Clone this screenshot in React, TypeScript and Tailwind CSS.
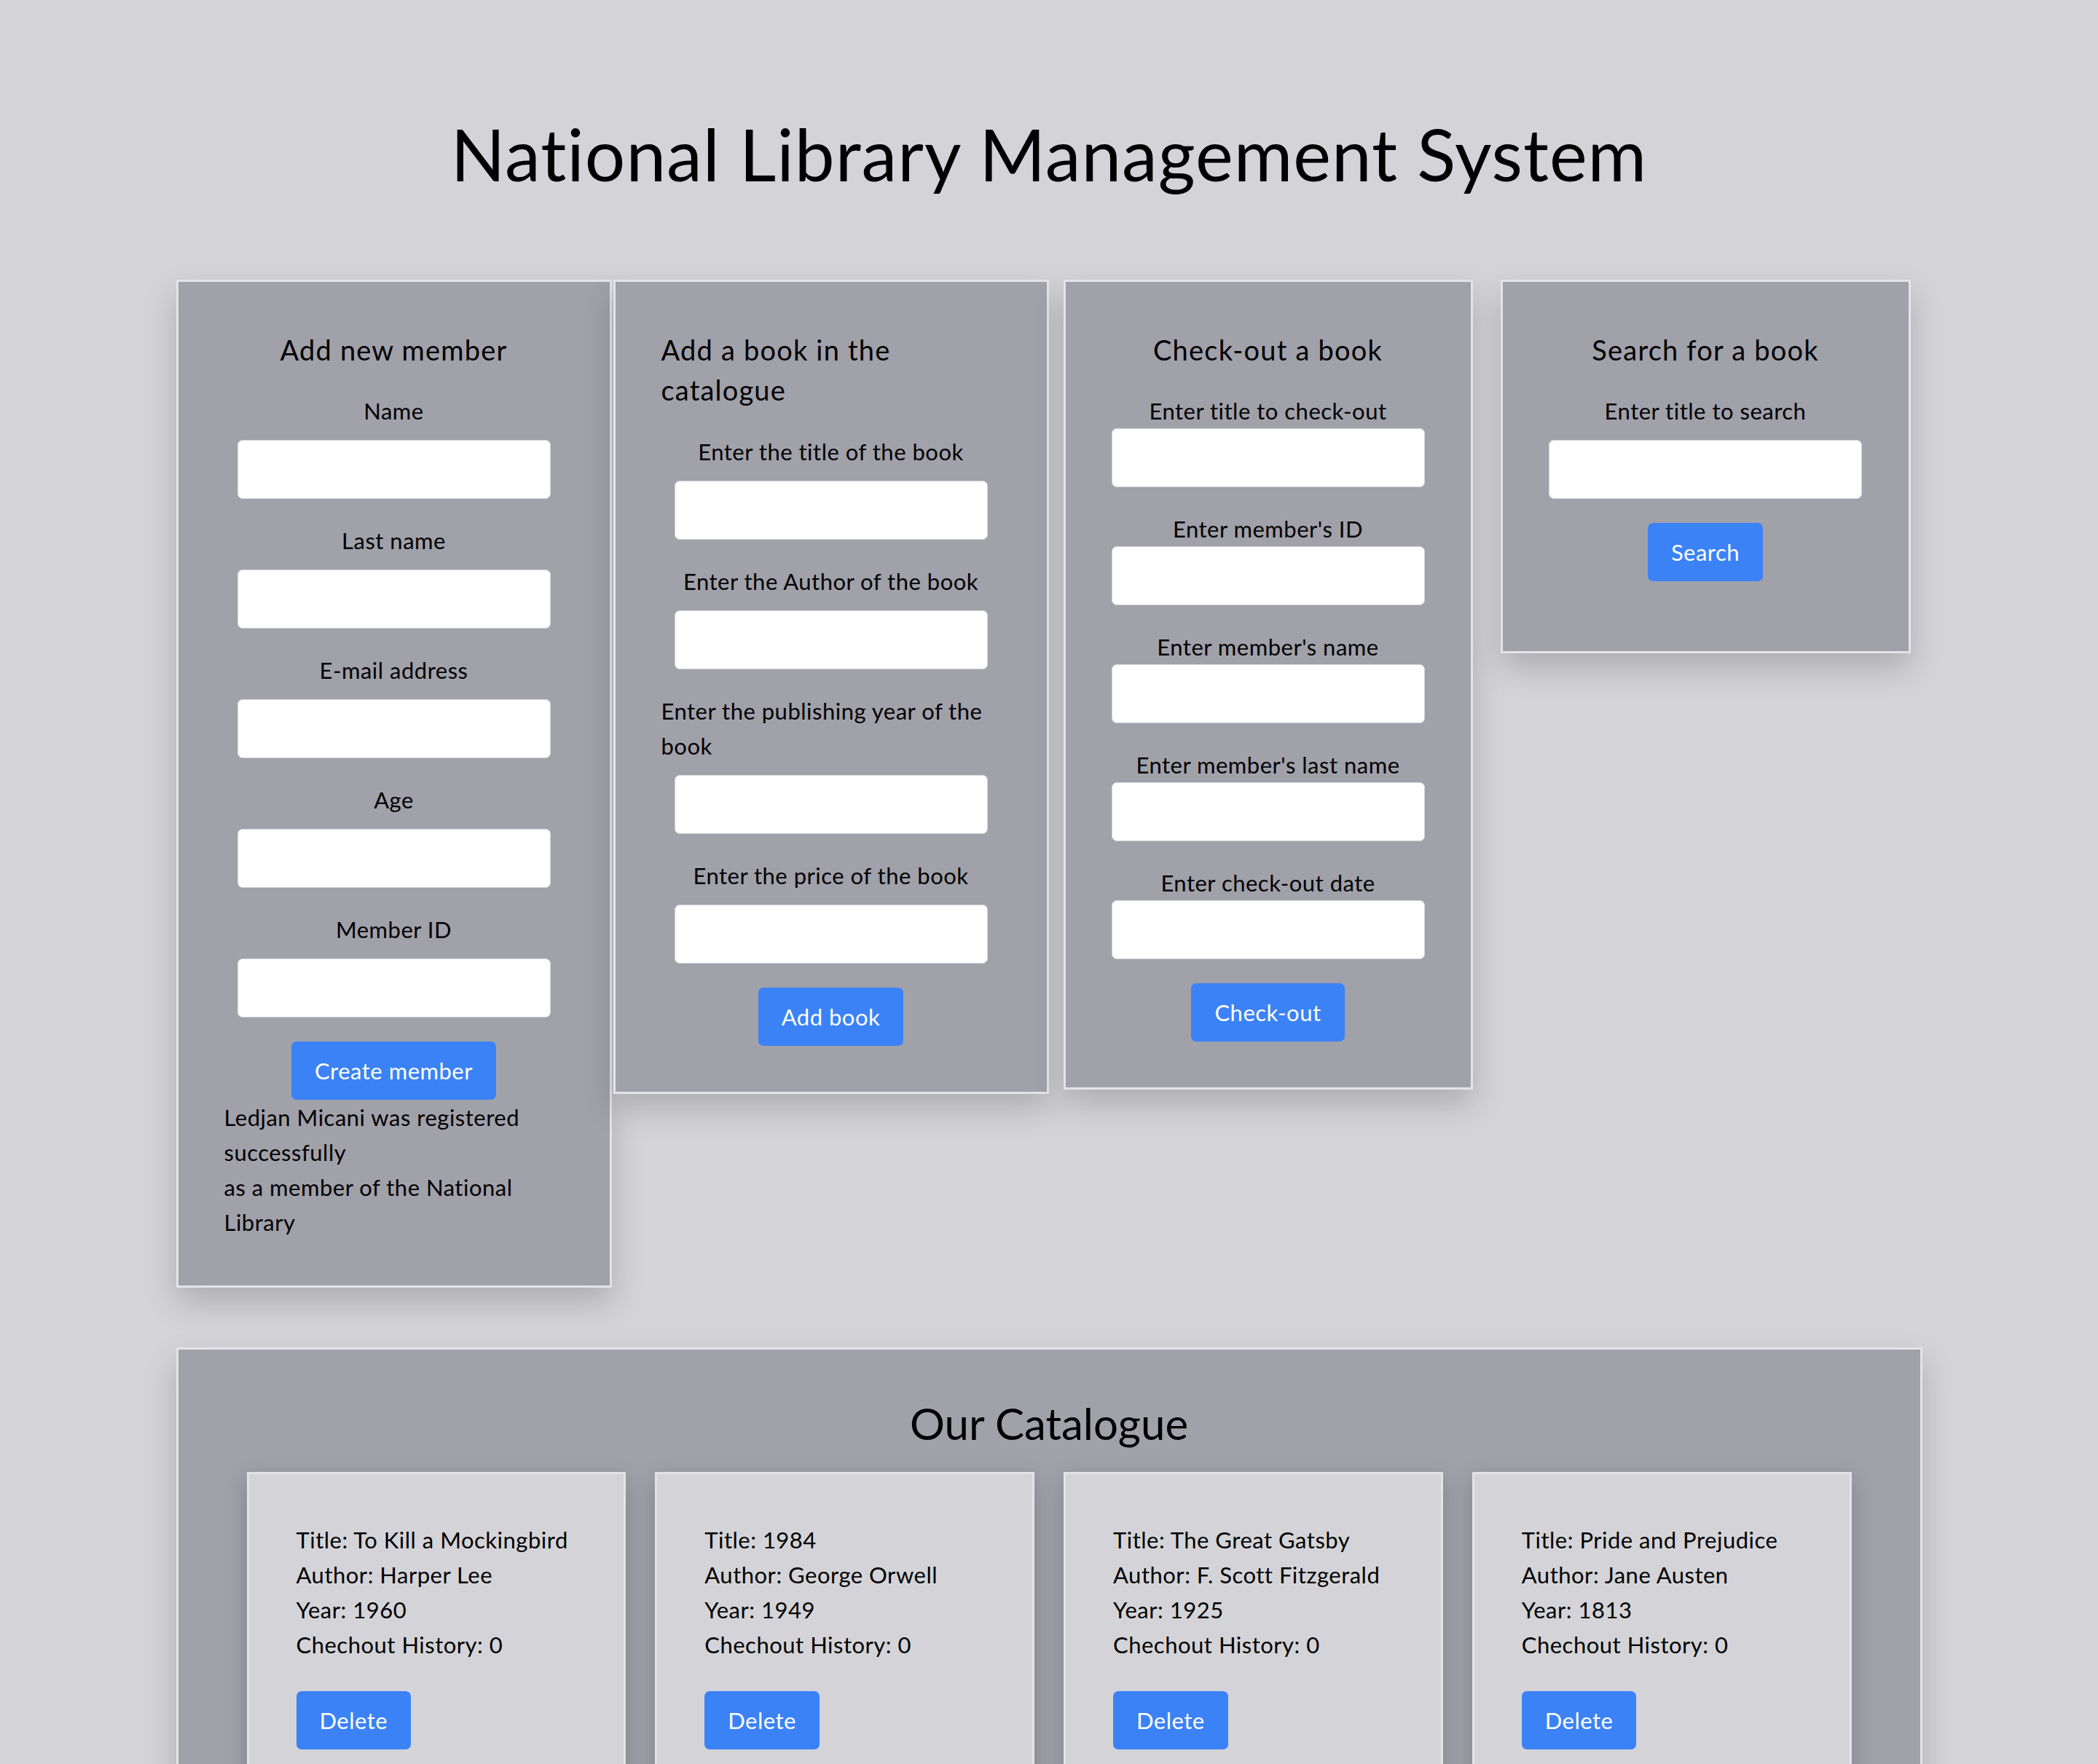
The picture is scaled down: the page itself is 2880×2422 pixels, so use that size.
import React from "react";

const books = [
  { title: "To Kill a Mockingbird", author: "Harper Lee", year: 1960 },
  { title: "1984", author: "George Orwell", year: 1949 },
  { title: "The Great Gatsby", author: "F. Scott Fitzgerald", year: 1925 },
  { title: "Pride and Prejudice", author: "Jane Austen", year: 1813 },
];

function Field({ label, gap = true }: { label: string; gap?: boolean }) {
  return (
    <div className="flex w-full flex-col items-center">
      <label className={`text-[31px] leading-[48px] tracking-[0.5px] ${gap ? "mb-[16px]" : ""}`}>{label}</label>
      <input
        type="text"
        className="h-[81px] w-[430px] rounded-[7px] border border-[#d4d4d8] bg-white outline-none"
      />
    </div>
  );
}

function Button({ children }: { children: React.ReactNode }) {
  return (
    <button className="h-[80px] rounded-[7px] bg-[#3b82f6] px-[32px] text-[31px] tracking-[0.5px] text-white">
      {children}
    </button>
  );
}

export default function App() {
  return (
    <div className="min-h-screen bg-[#d4d4d8] pb-[80px] font-['Lato',sans-serif] text-black">
      <h1 className="pt-[154px] text-center text-[98px] leading-[115px] tracking-[1px]">
        National Library Management System
      </h1>

      <div className="mx-auto mt-[115px] w-[2397px]">
        <div className="flex items-start">
          {/* add member */}
          <div className="flex w-[598px] shrink-0 flex-col items-center gap-[33px] border-[3px] border-[#e4e4e7] bg-[#a1a1aa] px-[63px] pb-[63px] pt-[66px] shadow-[0_20px_40px_rgba(0,0,0,0.18)]">
            <h2 className="-mb-[1px] text-[38px] leading-[55px] tracking-[1.2px]">Add new member</h2>
            <Field label="Name" />
            <Field label="Last name" />
            <Field label="E-mail address" />
            <Field label="Age" />
            <Field label="Member ID" />
            <div className="flex w-full flex-col items-center">
              <Button>Create member</Button>
              <p className="text-[31px] leading-[48px] tracking-[0.5px]">
                Ledjan Micani was registered successfully
                <br />
                as a member of the National Library
              </p>
            </div>
          </div>

          {/* add book */}
          <div className="ml-[2px] flex w-[598px] shrink-0 flex-col items-center gap-[33px] border-[3px] border-[#e4e4e7] bg-[#a1a1aa] px-[63px] pb-[63px] pt-[66px] shadow-[0_20px_40px_rgba(0,0,0,0.18)]">
            <h2 className="text-[38px] leading-[55px] tracking-[1.2px]">Add a book in the catalogue</h2>
            <Field label="Enter the title of the book" />
            <Field label="Enter the Author of the book" />
            <Field label="Enter the publishing year of the book" />
            <Field label="Enter the price of the book" />
            <Button>Add book</Button>
          </div>

          {/* check-out */}
          <div className="ml-[20px] flex w-[562px] shrink-0 flex-col items-center gap-[33px] border-[3px] border-[#e4e4e7] bg-[#a1a1aa] px-[63px] pb-[63px] pt-[66px] shadow-[0_20px_40px_rgba(0,0,0,0.18)]">
            <h2 className="-mb-[1px] text-[38px] leading-[55px] tracking-[1.2px]">Check-out a book</h2>
            <Field label="Enter title to check-out" gap={false} />
            <Field label="Enter member's ID" gap={false} />
            <Field label="Enter member's name" gap={false} />
            <Field label="Enter member's last name" gap={false} />
            <Field label="Enter check-out date" gap={false} />
            <Button>Check-out</Button>
          </div>

          {/* search */}
          <div className="ml-[38px] flex w-[563px] shrink-0 flex-col items-center gap-[33px] border-[3px] border-[#e4e4e7] bg-[#a1a1aa] px-[63px] pb-[96px] pt-[66px] shadow-[0_20px_40px_rgba(0,0,0,0.18)]">
            <h2 className="-mb-[1px] text-[38px] leading-[55px] tracking-[1.2px]">Search for a book</h2>
            <Field label="Enter title to search" />
            <Button>Search</Button>
          </div>
        </div>

        {/* catalogue */}
        <section className="mt-[82px] border-[3px] border-[#e4e4e7] bg-[#a1a1aa] px-[94px] pb-[96px] pt-[55px] shadow-[0_20px_40px_rgba(0,0,0,0.18)]">
          <h2 className="mb-[21px] text-center text-[60px] leading-[92px]">Our Catalogue</h2>
          <div className="grid grid-cols-4 gap-[40px]">
            {books.map((b) => (
              <div
                key={b.title}
                className="border-[3px] border-[#e4e4e7] bg-[#d4d4d8] px-[65px] pb-[66px] pt-[66px] text-[31px] leading-[48px] tracking-[0.5px] shadow-[0_10px_30px_rgba(0,0,0,0.2)]"
              >
                <p>Title: {b.title}</p>
                <p>Author: {b.author}</p>
                <p>Year: {b.year}</p>
                <p>Chechout History: 0</p>
                <div className="mt-[40px]">
                  <Button>Delete</Button>
                </div>
              </div>
            ))}
          </div>
        </section>
      </div>
    </div>
  );
}
